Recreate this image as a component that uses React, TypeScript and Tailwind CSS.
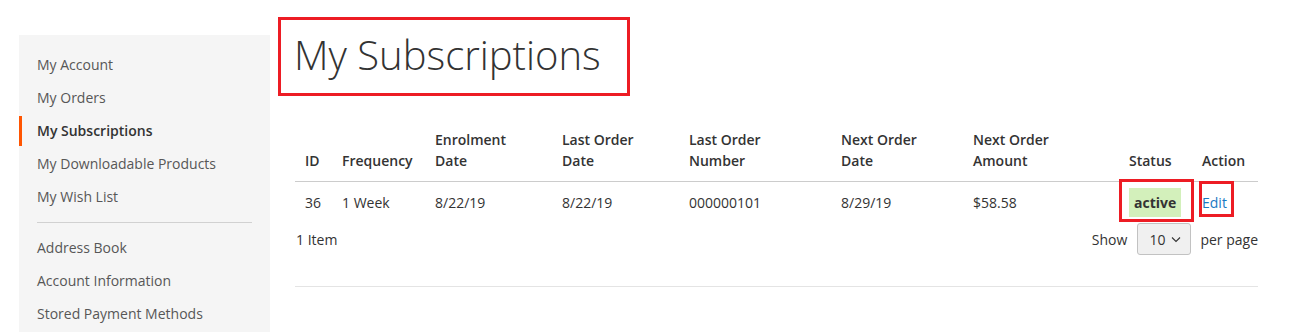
import React from 'react';

const NAV_TOP = ['My Account', 'My Orders', 'My Subscriptions', 'My Downloadable Products', 'My Wish List'];
const NAV_BOTTOM = ['Address Book', 'Account Information', 'Stored Payment Methods'];

const COLUMNS = [
  { label: ['ID'], width: 'w-[37px]' },
  { label: ['Frequency'], width: 'w-[93px]' },
  { label: ['Enrolment', 'Date'], width: 'w-[127px]' },
  { label: ['Last Order', 'Date'], width: 'w-[127px]' },
  { label: ['Last Order', 'Number'], width: 'w-[152px]' },
  { label: ['Next Order', 'Date'], width: 'w-[132px]' },
  { label: ['Next Order', 'Amount'], width: 'w-[156px]' },
  { label: ['Status'], width: 'w-[73px]' },
  { label: ['Action'], width: 'w-[66px]' },
];

const NavItem: React.FC<{ label: string; active?: boolean }> = ({ label, active }) => (
  <li className="mt-[3px] first:mt-0">
    {active ? (
      <strong className="block border-l-[3px] border-[#ff5501] pl-[15px] pr-[18px] py-[5px] leading-[20px] font-semibold text-[#333]">
        {label}
      </strong>
    ) : (
      <a href="#" className="block border-l-[3px] border-transparent pl-[15px] pr-[18px] py-[5px] leading-[20px] text-[#575757]">
        {label}
      </a>
    )}
  </li>
);

const Sidebar: React.FC = () => (
  <aside className="mt-[35px] w-[251px] shrink-0 bg-[#f5f5f5] py-[15px] text-[14px]">
    <ul>
      {NAV_TOP.map((item) => (
        <NavItem key={item} label={item} active={item === 'My Subscriptions'} />
      ))}
    </ul>
    <div className="mx-[18px] my-[10px] border-t border-[#d1d1d1]" />
    <ul>
      {NAV_BOTTOM.map((item) => (
        <NavItem key={item} label={item} />
      ))}
    </ul>
  </aside>
);

const SubscriptionsTable: React.FC = () => (
  <table className="w-[963px] table-fixed border-collapse text-left text-[14px] text-[#333]">
    <colgroup>
      {COLUMNS.map((col) => (
        <col key={col.label.join(' ')} className={col.width} />
      ))}
    </colgroup>
    <thead>
      <tr className="border-b border-[#cccccc]">
        {COLUMNS.map((col) => (
          <th key={col.label.join(' ')} className="px-[10px] pt-[8px] pb-[10px] align-bottom font-semibold leading-[21px]">
            {col.label.map((line, i) => (
              <span key={line} className="block">
                {line}
                {i < col.label.length - 1 ? '' : null}
              </span>
            ))}
          </th>
        ))}
      </tr>
    </thead>
    <tbody>
      <tr className="leading-[20px]">
        <td className="px-[10px] py-[11px]">36</td>
        <td className="px-[10px] py-[11px]">1 Week</td>
        <td className="px-[10px] py-[11px]">8/22/19</td>
        <td className="px-[10px] py-[11px]">8/22/19</td>
        <td className="px-[10px] py-[11px]">000000101</td>
        <td className="px-[10px] py-[11px]">8/29/19</td>
        <td className="px-[10px] py-[11px]">$58.58</td>
        <td className="relative px-[10px] py-[11px]">
          <span className="bg-[#d3f0bb] px-[5px] py-[5px] font-bold">active</span>
          <span className="absolute left-0 top-[-3px] h-[43px] w-[75px] border-[3px] border-[#ed1c24]" />
        </td>
        <td className="relative px-[10px] py-[11px]">
          <a href="#" className="text-[#1979c3]">Edit</a>
          <span className="absolute left-[7px] top-[-1px] h-[36px] w-[35px] border-[3px] border-[#ed1c24]" />
        </td>
      </tr>
    </tbody>
  </table>
);

const Toolbar: React.FC = () => (
  <div className="-mt-px flex h-[32px] items-center justify-between text-[14px] text-[#333]">
    <span className="pl-px">1 Item</span>
    <div className="flex items-center">
      <span>Show</span>
      <div className="ml-[10px] mr-[9px] flex h-[32px] w-[54px] items-center rounded-[3px] border border-[#c2c2c2] bg-[#f0f0f0] pl-[11px]">
        <span>10</span>
        <svg className="ml-[5px] h-[12px] w-[12px]" viewBox="0 0 12 12" fill="none" stroke="#333" strokeWidth={1.1}>
          <polyline points="2,4.5 6,8.5 10,4.5" />
        </svg>
      </div>
      <span>per page</span>
    </div>
  </div>
);

export default function App() {
  return (
    <div className="flex h-[332px] w-[1290px] items-start overflow-hidden bg-white pl-[19px] font-['Open_Sans',sans-serif]">
      <Sidebar />
      <main className="ml-[8px]">
        <div className="mt-[17px] h-[79px] w-[352px] border-[3px] border-[#ed1c24] pl-[13px] pt-[13px]">
          <h1 className="text-[40px] font-light leading-[44px] text-[#333]">My Subscriptions</h1>
        </div>
        <div className="ml-[17px] mt-[25px] w-[963px]">
          <SubscriptionsTable />
          <Toolbar />
          <div className="mt-[31px] border-t border-[#e4e4e4]" />
        </div>
      </main>
    </div>
  );
}
